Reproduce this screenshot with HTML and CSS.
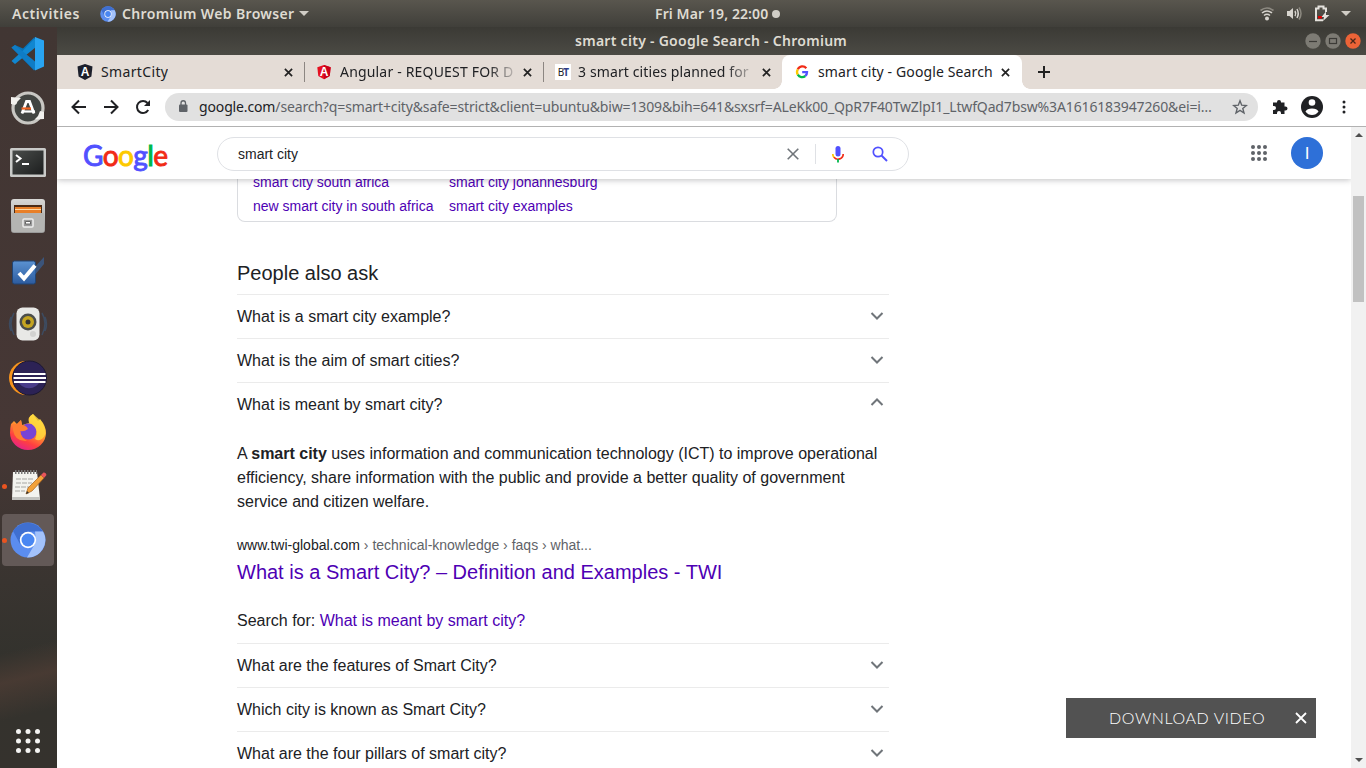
FILE: index.html
```html
<!DOCTYPE html>
<html lang="en">
<head>
<meta charset="utf-8">
<title>smart city - Google Search</title>
<link rel="stylesheet" href="styles.css">
</head>
<body>
<svg width="0" height="0" class="defs">
  <defs>
    <linearGradient id="ff" x1="0.8" y1="0" x2="0.3" y2="1"><stop offset="0" stop-color="#fff04a"/><stop offset=".45" stop-color="#ff9a2e"/><stop offset=".75" stop-color="#ff4040"/><stop offset="1" stop-color="#e4218c"/></linearGradient>
    <linearGradient id="steel" x1="0" y1="0" x2="0" y2="1"><stop offset="0" stop-color="#d8d8d6"/><stop offset="1" stop-color="#999"/></linearGradient>
    <linearGradient id="screen" x1="0" y1="0" x2="1" y2="1"><stop offset="0" stop-color="#4a4d4b"/><stop offset="1" stop-color="#1c1e1e"/></linearGradient>
    <linearGradient id="todo" x1="0" y1="0" x2="0" y2="1"><stop offset="0" stop-color="#5b92d2"/><stop offset="1" stop-color="#2c5b9e"/></linearGradient>
    <symbol id="chromium" viewBox="0 0 36 36">
      <circle cx="18" cy="18" r="17.500" fill="#5b8def"/>
      <path d="M3 9A17.500 17.500 0 0 1 33 9.500L18 9.500 10 22Z" fill="#3f6fd0"/>
      <path d="M33 9.500A17.500 17.500 0 0 1 17 35.500L26 20 25 9.500Z" fill="#a3c2fb"/>
      <circle cx="18" cy="18" r="8.200" fill="#fff"/><circle cx="18" cy="18" r="6.500" fill="#4a87f2"/>
    </symbol>
    <symbol id="down" viewBox="0 0 14 10"><path d="M1.500 1L7 6.500 12.500 1" fill="none" stroke="#70757a" stroke-width="2"/></symbol>
    <symbol id="x" viewBox="0 0 10 10"><path d="M1 1L9 9M9 1L1 9" stroke="currentColor" stroke-width="1.900"/></symbol>
  </defs>
</svg>
<header class="topbar">
  <span class="activities">Activities</span>
  <svg class="app-icon" width="16" height="16"><use href="#chromium"/></svg>
  <span class="app-name">Chromium Web Browser</span>
  <i class="caret"></i>
  <span class="clock">Fri Mar 19, 22:00</span><i class="clock-dot"></i>
  <div class="tray">
    <svg width="16" height="16" viewBox="0 0 16 16" fill="none" stroke="#d8d5cf" stroke-width="1.600"><path d="M1.500 4.500Q8 -.5 14.500 4.500" stroke="#8c8980"/><path d="M3 7Q8 3 13 7M5 9.500Q8 7 11 9.500"/><circle cx="8" cy="12.500" r="1.200" fill="#d8d5cf"/></svg>
    <svg width="17" height="16" viewBox="0 0 17 16" fill="none" stroke="#d8d5cf" stroke-width="1.500"><path d="M1 5H3.500L7 2V13L3.500 10H1Z" fill="#d8d5cf" stroke="none"/><path d="M9 5Q10.500 7.500 9 10M11 3Q13.500 7.500 11 12"/><path d="M13 1.500Q17 7.500 13 13.500" stroke="#8c8980"/></svg>
    <svg width="16" height="17" viewBox="0 0 16 17"><path d="M9 15.200H2V3.500H4.500V1.500H9.500V3.500H12V7" fill="none" stroke="#e4e1dc" stroke-width="2"/><path d="M4 11H8V13.500H4Z" fill="#d00"/><path d="M12 6.500L7.500 12H10L9 16 15.500 10H12Z" fill="#e4e1dc"/></svg>
    <i class="caret"></i>
  </div>
</header>
<div class="desktop">
  <nav class="launcher">
    <span class="item"><svg width="36" height="36" viewBox="0 0 36 36"><path d="M24.500 1L13 12.500 5 9 1.500 11.500 24 34.500V26L15.500 18.500 25 10Z" fill="#0873b8"/><path d="M1.500 25L5 28 26 11V1L13.500 14Z" fill="#1187d0"/><path d="M1.500 11.500L5 9 25 25.500V34.500Z" fill="#0f7cc5"/><path d="M25 1L34 4.500V30.500L25 34.500Z" fill="#29a4f1"/></svg></span>
    <span class="item"><svg width="36" height="36" viewBox="0 0 36 36"><circle cx="18" cy="18" r="15" fill="#424542" stroke="#c8c7c3" stroke-width="3.200"/><path d="M1 7L11 8 7.500 11.500Q7 14 5 15L1 14ZM34 29L24.500 29.500 28 26 30 21 34 22Z" fill="#f2f1ee"/><path d="M12 23.500L16.500 11.500H19.500L24 23.500" fill="none" stroke="#fff" stroke-width="2.800"/><path d="M13 21.500H25" stroke="#fff" stroke-width="2.200"/><path d="M11.500 18.500H21" stroke="#f26422" stroke-width="2.200"/></svg></span>
    <span class="item"><svg width="38" height="32" viewBox="0 0 38 32"><rect x="1" y="2" width="36" height="29" rx="1.500" fill="#c9cac8"/><rect x="3.500" y="4.500" width="31" height="24" fill="url(#screen)"/><path d="M7 9L11.500 12.500 7 16" fill="none" stroke="#fff" stroke-width="2"/><path d="M13 18H20" stroke="#fff" stroke-width="2"/></svg></span>
    <span class="item"><svg width="36" height="36" viewBox="0 0 36 36"><rect x="1" y="1" width="34" height="34" rx="3" fill="url(#steel)"/><rect x="4" y="7" width="28" height="8" fill="#4b2b16"/><path d="M5 9H31V15H5Z" fill="#e87f28"/><path d="M5 11.500H31" stroke="#ffd9a5"/><rect x="2" y="15" width="32" height="19" rx="1" fill="#b4b4b2"/><rect x="13" y="21" width="10" height="8" rx="1" fill="#999" stroke="#eee" stroke-width="1.500"/><path d="M15.500 23.500H20.500V26H15.500Z" fill="#fff" stroke="#666"/></svg></span>
    <span class="item"><svg width="36" height="36" viewBox="0 0 36 36"><rect x="2.500" y="9" width="23" height="23" rx="2" fill="url(#todo)" stroke="#204474"/><path d="M22 18L34 5V12L24 24Z" fill="#356db5" opacity=".55"/><path d="M9 21L14 26.500 25 13.500" fill="none" stroke="#fff" stroke-width="4"/></svg></span>
    <span class="item"><svg width="40" height="38" viewBox="0 0 40 38"><path d="M6 8Q0 18 6 30M3 12Q0 19 3 26M34 8Q40 18 34 30M37 12Q40 19 37 26" fill="none" stroke="#3d4b60" stroke-width="1.500"/><rect x="8.500" y="2.500" width="23" height="33" rx="6" fill="#e8e8e6"/><circle cx="20" cy="17" r="8.500" fill="#4c4e4b"/><circle cx="20" cy="17" r="6" fill="#c5a521"/><circle cx="20" cy="17" r="2.500" fill="#333"/><circle cx="25" cy="29" r="3" fill="#d2d2d0"/></svg></span>
    <span class="item"><svg width="40" height="38" viewBox="0 0 40 38"><circle cx="18" cy="19" r="17" fill="#f7941e"/><circle cx="21.500" cy="19" r="17" fill="#2c2255" stroke="#1b1733"/><path d="M10 22A12 12 0 0 0 32 22Z" fill="#4a3c8a"/><path d="M6 15H37.500M5.500 19H38M6 23H37.500" stroke="#fff" stroke-width="2"/></svg></span>
    <span class="item"><svg width="38" height="38" viewBox="0 0 38 38"><path d="M2 11L5 8 8 11 12 7 13 12 20 10Q18 4 24 1L29 8 31 6Q37 13 37 20A18 17 0 0 1 1 20Q1 15 2 11Z" fill="url(#ff)"/><circle cx="19.500" cy="18.500" r="8" fill="#7744d5"/><path d="M4 11L8 11 12 7 13 12Q17 12 19 16 15 19 11 18 12 25 18 28 6 29 4 17Z" fill="#ff7e32"/><path d="M24 1Q37 11 36.500 21 32 30 26 26 31 16 21 10Q18 5 24 1Z" fill="#ffda3e" opacity=".8"/></svg></span>
    <span class="item running"><svg width="40" height="38" viewBox="0 0 40 38"><path d="M5 5H29L32 32H4Z" fill="#f3f3ef"/><path d="M4 30H32V33H4Z" fill="#c2c2be"/><path d="M7 5H29" stroke="#777" stroke-width="4" stroke-dasharray="1.500 1.500"/><path d="M8 12H26M8 16H24M7 20H21M7 24H17" stroke="#a7a7a3" stroke-dasharray="5 1"/><path d="M18 27L20 21 33 8 36 11 24 24Z" fill="#f2a13a" stroke="#a6601a" stroke-width=".7"/><path d="M33 8L35.500 5.500Q38 5 38.500 8L36 11Z" fill="#e8555a"/><path d="M18 27L19 24 21 26Z" fill="#333"/></svg></span>
    <span class="item running active"><svg width="36" height="36"><use href="#chromium"/></svg></span>
    <span class="item apps"><svg width="26" height="26" viewBox="0 0 26 26" fill="#f4f4f2"><circle cx="3.500" cy="3.500" r="2.500"/><circle cx="13" cy="3.500" r="2.500"/><circle cx="22.500" cy="3.500" r="2.500"/><circle cx="3.500" cy="13" r="2.500"/><circle cx="13" cy="13" r="2.500"/><circle cx="22.500" cy="13" r="2.500"/><circle cx="3.500" cy="22.500" r="2.500"/><circle cx="13" cy="22.500" r="2.500"/><circle cx="22.500" cy="22.500" r="2.500"/></svg></span>
  </nav>
  <section class="window">
    <div class="titlebar">
      <span class="window-title">smart city - Google Search - Chromium</span>
      <div class="controls">
        <svg width="16" height="16" viewBox="0 0 16 16"><circle cx="8" cy="8" r="7.700" fill="#7d7b74"/><path d="M4 8.500H12" stroke="#3c3b37" stroke-width="1.200"/></svg>
        <svg width="16" height="16" viewBox="0 0 16 16"><circle cx="8" cy="8" r="7.700" fill="#7d7b74"/><rect x="4.500" y="5.500" width="7" height="5" fill="none" stroke="#3c3b37" stroke-width="1.200"/></svg>
        <svg width="16" height="16" viewBox="0 0 16 16"><circle cx="8" cy="8" r="7.700" fill="#ec6337"/><path d="M5.500 5.500L10.500 10.500M10.500 5.500L5.500 10.500" stroke="#4a2618" stroke-width="1.300"/></svg>
      </div>
    </div>
    <div class="tabs">
      <div class="tab first"><svg class="fav" width="16" height="16" viewBox="0 0 16 16"><path d="M8 0L15.500 2.600 14.400 12.400 8 16 1.600 12.400.5 2.600Z" fill="#1c1f2b"/><text x="8" y="12" text-anchor="middle" class="fav-a">A</text></svg><span class="label l1">SmartCity</span><svg class="close" width="9" height="9"><use href="#x"/></svg></div>
      <div class="tab second"><svg class="fav" width="16" height="16" viewBox="0 0 16 16"><path d="M8 1L14.700 3.300 13.700 12 8 15.200 2.300 12 1.300 3.300Z" fill="#e5101f"/><path d="M8 1L14.700 3.300 13.700 12 8 15.200Z" fill="#c9001c"/><text x="8" y="11.800" text-anchor="middle" class="fav-a">A</text></svg><span class="label fade l2">Angular - REQUEST FOR D</span><svg class="close" width="9" height="9"><use href="#x"/></svg></div>
      <div class="tab third"><span class="fav bt">B<b>T</b></span><span class="label fade l3">3 smart cities planned for</span><svg class="close" width="9" height="9"><use href="#x"/></svg></div>
      <div class="tab current"><svg class="fav" width="16" height="16" viewBox="0 0 16 16" fill="none" stroke-width="2.300"><path d="M12.300 4.300A5 5 0 0 0 3.800 5.400" stroke="#f12b16"/><path d="M3.800 5.400A5 5 0 0 0 3.800 10.700" stroke="#fdc900"/><path d="M3.800 10.700A5 5 0 0 0 11.300 12" stroke="#00b84c"/><path d="M11.300 12A5 5 0 0 0 13 8.200H8.200" stroke="#5151ff"/></svg><span class="label l4">smart city - Google Search</span><svg class="close" width="9" height="9"><use href="#x"/></svg></div>
      <svg class="plus" width="12" height="12" viewBox="0 0 12 12"><path d="M6 0V12M0 6H12" stroke="#222" stroke-width="2"/></svg>
    </div>
    <div class="toolbar">
      <svg width="16" height="16" viewBox="0 0 16 16" fill="none" stroke="#202124" stroke-width="2"><path d="M15 8H2M8 1.500L1.500 8 8 14.500"/></svg>
      <svg width="16" height="16" viewBox="0 0 16 16" fill="none" stroke="#202124" stroke-width="2"><path d="M1 8H14M8 1.500L14.500 8 8 14.500"/></svg>
      <svg width="16" height="16" viewBox="0 0 16 16"><path d="M13.200 11A6 6 0 1 1 12.500 4" fill="none" stroke="#202124" stroke-width="2"/><path d="M15 1V7H9Z" fill="#202124"/></svg>
      <div class="omnibox">
        <svg width="10" height="13" viewBox="0 0 10 13"><rect x="1" y="4.500" width="8.500" height="7.500" rx="1" fill="#5f6368"/><path d="M3 5V3A2.200 2.200 0 0 1 7.500 3V5" fill="none" stroke="#5f6368" stroke-width="1.300"/></svg>
        <span class="url"><b>google.com</b>/search?q=smart+city&amp;safe=strict&amp;client=ubuntu&amp;biw=1309&amp;bih=641&amp;sxsrf=ALeKk00_QpR7F40TwZlpI1_LtwfQad7bsw%3A1616183947260&amp;ei=i…</span>
        <svg class="star" width="16" height="16" viewBox="0 0 16 16"><path d="M8 1.800L9.700 6.200 14.300 6.500 10.800 9.400 12 14 8 11.400 4 14 5.200 9.400 1.700 6.500 6.300 6.200Z" fill="none" stroke="#5f6368" stroke-width="1.400"/></svg>
      </div>
      <svg class="puzzle" width="16" height="16" viewBox="0 0 16 16"><path d="M1 3.500H5V3A2 2 0 0 1 9 3V3.500H12.500V7.500H13.500A2 2 0 0 1 13.500 11.500H12.500V15H9V14A2 2 0 0 0 5 14V15H1V11H2A2 2 0 0 0 2 7H1Z" fill="#202124"/></svg>
      <svg class="person" width="22" height="22" viewBox="0 0 22 22"><circle cx="11" cy="11" r="11" fill="#202124"/><circle cx="11" cy="6.500" r="3.300" fill="#fff"/><path d="M4.500 15.500Q6 12.500 11 12.500T17.500 15.500Q15 19 11 19T4.500 15.500Z" fill="#fff"/></svg>
      <svg class="kebab" width="4" height="14" viewBox="0 0 4 14" fill="#202124"><circle cx="2" cy="2" r="1.500"/><circle cx="2" cy="7" r="1.500"/><circle cx="2" cy="12" r="1.500"/></svg>
    </div>
    <div class="viewport">
      <div class="page">
        <div class="search-header">
          <div class="logo" aria-label="Google"><span class="blue">G</span><span class="red">o</span><span class="yellow">o</span><span class="blue">g</span><span class="green">l</span><span class="red">e</span></div>
          <div class="searchbox">
            <span class="query">smart city</span>
            <svg width="12" height="12" viewBox="0 0 12 12"><path d="M.7.7L11.300 11.300M11.300.7L.7 11.300" stroke="#70757a" stroke-width="1.600"/></svg>
            <i class="divider"></i>
            <svg width="14" height="18" viewBox="0 0 14 18"><rect x="4.500" y="1" width="5" height="10.500" rx="2.500" fill="#5151ff"/><path d="M1.800 9A5.300 5.300 0 0 0 3 12.500" fill="none" stroke="#fdc900" stroke-width="1.700"/><path d="M3 12.300A5.200 5.200 0 0 0 12.200 9" fill="none" stroke="#f12b16" stroke-width="1.700"/><path d="M7 14V17.500" stroke="#00b84c" stroke-width="1.800"/></svg>
            <svg class="glass" width="16" height="16" viewBox="0 0 16 16"><circle cx="6" cy="6" r="4.700" fill="none" stroke="#5151ff" stroke-width="1.700"/><path d="M9.500 9.500L15 15" stroke="#5151ff" stroke-width="1.900"/></svg>
          </div>
          <svg class="grid" width="16" height="16" viewBox="0 0 16 16" fill="#5f6368"><circle cx="2" cy="2" r="2"/><circle cx="8" cy="2" r="2"/><circle cx="14" cy="2" r="2"/><circle cx="2" cy="8" r="2"/><circle cx="8" cy="8" r="2"/><circle cx="14" cy="8" r="2"/><circle cx="2" cy="14" r="2"/><circle cx="8" cy="14" r="2"/><circle cx="14" cy="14" r="2"/></svg>
          <span class="avatar">I</span>
        </div>
        <main class="results">
          <div class="related"><a>smart city south africa</a><a>smart city johannesburg</a><a>new smart city in south africa</a><a>smart city examples</a></div>
          <h2>People also ask</h2>
          <div class="question">What is a smart city example?<svg width="14" height="10"><use href="#down"/></svg></div>
          <div class="question">What is the aim of smart cities?<svg width="14" height="10"><use href="#down"/></svg></div>
          <div class="question open">What is meant by smart city?<svg width="14" height="10"><use href="#down"/></svg></div>
          <div class="answer">
            <p>A <b>smart city</b> uses information and communication technology (ICT) to improve operational<br>efficiency, share information with the public and provide a better quality of government<br>service and citizen welfare.</p>
            <div class="cite">www.twi-global.com<span> › technical-knowledge › faqs › what...</span></div>
            <a class="source">What is a Smart City? – Definition and Examples - TWI</a>
            <div class="search-for">Search for: <a>What is meant by smart city?</a></div>
          </div>
          <div class="question">What are the features of Smart City?<svg width="14" height="10"><use href="#down"/></svg></div>
          <div class="question">Which city is known as Smart City?<svg width="14" height="10"><use href="#down"/></svg></div>
          <div class="question">What are the four pillars of smart city?<svg width="14" height="10"><use href="#down"/></svg></div>
        </main>
        <div class="download"><span>DOWNLOAD VIDEO</span><svg width="12" height="12" viewBox="0 0 12 12"><path d="M1 1L11 11M11 1L1 11" stroke="#fff" stroke-width="1.800"/></svg></div>
      </div>
      <div class="scrollbar"><i class="up"></i><i class="thumb"></i><i class="dn"></i></div>
    </div>
  </section>
</div>
</body>
</html>
```
FILE: styles.css
```css
* { box-sizing: border-box; }
body { margin: 0; width: 1366px; height: 768px; overflow: hidden; display: flex; flex-direction: column; font-family: "Liberation Sans", Arial, sans-serif; color: #202124; background: #fff; }
svg { display: block; flex: none; }
.defs { position: absolute; }
a { color: #4e00b4; }

.topbar { height: 27px; flex: none; display: flex; align-items: center; padding-left: 12px; background: linear-gradient(#59564e, #403f3a); color: #dfdbd2; font: 600 14px/27px "Noto Sans", sans-serif; white-space: nowrap; }
.activities { width: 88px; letter-spacing: .55px; }
.app-name { margin-left: 6px; width: 173px; letter-spacing: .35px; }
.caret { border: 5px solid transparent; border-top-color: #d0cdc6; border-bottom: 0; margin-left: 4px; }
.clock { margin-left: 346px; width: 114px; letter-spacing: .1px; }
.clock-dot { width: 8px; height: 8px; border-radius: 50%; background: #d0cdc6; margin-left: 3px; }
.tray { margin-left: auto; padding-right: 15px; display: flex; align-items: center; gap: 11px; }
.tray .caret { margin-left: 0; }

.desktop { flex: 1; min-height: 0; display: flex; }
.launcher { width: 57px; display: flex; flex-direction: column; background: linear-gradient(166deg, transparent 83%, rgba(92,66,56,.5) 87%, transparent 92%), linear-gradient(#413633 0, #463735 55%, #393430 75%, #33322d 85%, #35322d); }
.item { width: 56px; height: 54px; flex: none; display: flex; align-items: center; justify-content: center; position: relative; }
.item.active { width: 52px; height: 52px; margin: 1px 2px; border-radius: 4px; background: #635957; }
.item.running::before { content: ""; position: absolute; left: 2px; width: 5px; height: 5px; border-radius: 50%; background: #e95420; }
.item.active::before { left: 0; }
.apps { margin-top: auto; }

.window { flex: 1; min-width: 0; display: flex; flex-direction: column; }
.titlebar { height: 28px; flex: none; display: flex; align-items: center; background: linear-gradient(#3b3a35, #4b4a44); color: #dfdbd2; font: 600 14px/28px "Noto Sans", sans-serif; }
.window-title { margin-left: 518px; white-space: nowrap; letter-spacing: .28px; }
.controls { margin-left: auto; display: flex; gap: 4px; padding-right: 5px; }
.tabs { height: 34px; flex: none; display: flex; align-items: center; background: #e4dcd6; font: 14px/34px "Noto Sans", sans-serif; }
.tab { height: 34px; display: flex; align-items: center; position: relative; }
.label { margin-left: 8px; white-space: nowrap; overflow: hidden; }
.close { margin-left: auto; color: #222; }
.first { width: 248px; padding: 0 12px 0 20px; }
.second { width: 239px; padding: 0 12px 0 11px; }
.third { width: 238px; padding: 0 11px; }
.first::after, .second::after { content: ""; position: absolute; right: 0; top: 7px; width: 1px; height: 20px; background: #8c8682; }
.l1 { letter-spacing: .35px; }
.l2, .l3 { width: 177px; }
.l2 { letter-spacing: .18px; }
.l3 { letter-spacing: .12px; margin-left: 7px; }
.l4 { width: 179px; letter-spacing: .12px; }
.fade { -webkit-mask-image: linear-gradient(90deg, #000 148px, transparent 180px); mask-image: linear-gradient(90deg, #000 148px, transparent 180px); }
.fav { flex: none; }
.fav-a { font: bold 12px "Liberation Sans", Arial, sans-serif; fill: #fff; }
.bt { width: 16px; height: 16px; background: #fff; font: 10px/16px "Noto Sans", sans-serif; letter-spacing: -.8px; text-align: center; }
.bt b { color: #303d88; }
.current { width: 240px; padding: 0 12px; background: #fff; border-radius: 8px 8px 0 0; }
.current::before, .current::after { content: ""; position: absolute; bottom: 0; width: 8px; height: 8px; }
.current::before { left: -8px; background: radial-gradient(circle at 0 0, transparent 7.500px, #fff 8px); }
.current::after { right: -8px; background: radial-gradient(circle at 100% 0, transparent 7.500px, #fff 8px); }
.plus { margin-left: 16px; }
.toolbar { height: 38px; flex: none; border-bottom: 1px solid #b2b2b2; background: #fff; display: flex; align-items: center; gap: 16px; padding: 0 0 2px 14px; }
.omnibox { width: 1093px; height: 28px; margin-left: -2px; border-radius: 14px; background: #e1e1e1; display: flex; align-items: center; padding: 0 10px 0 13px; }
.url { flex: 1; margin-left: 11px; font: 14px/28px "Noto Sans", sans-serif; letter-spacing: -.14px; white-space: nowrap; color: #5f6368; }
.url b { font-weight: 400; color: #202124; }
.puzzle { margin-left: -2px; }
.person { margin-left: -3px; }
.kebab { margin-left: 3px; }

.viewport { flex: 1; min-height: 0; display: flex; }
.page { flex: 1; min-width: 0; display: flex; flex-direction: column; position: relative; overflow: hidden; }
.search-header { height: 52px; flex: none; display: flex; align-items: center; position: relative; z-index: 1; padding-left: 26px; background: #fff; box-shadow: 0 1px 6px rgba(32,33,36,.28); }
.logo { width: 134px; font: 28px/36px Lato, sans-serif; -webkit-text-stroke: .9px; letter-spacing: -.6px; padding-top: 3px; }
.blue { color: #5151ff; } .red { color: #f12b16; } .yellow { color: #fdc900; } .green { color: #00b84c; }
.searchbox { width: 692px; height: 34px; margin-top: 1px; border: 1px solid #dfe1e5; border-radius: 17px; display: flex; align-items: center; padding: 0 20px; font-size: 14px; }
.query { flex: 1; }
.divider { width: 1px; height: 20px; margin: 0 15px 0 16px; background: #dfe1e5; }
.glass { margin-left: 27px; }
.grid { margin-left: auto; }
.avatar { width: 32px; height: 32px; margin: 0 28px 0 24px; border-radius: 50%; background: #2e70d8; color: #fff; font-size: 17px; line-height: 34px; text-align: center; }
.results { flex: 1; min-height: 0; overflow: hidden; padding-left: 180px; }
.related { width: 600px; margin-top: -11px; height: 54px; padding: 2px 15px 0; border: 1px solid #dadce0; border-top: 0; border-radius: 0 0 8px 8px; display: grid; grid-template-columns: 196px 1fr; grid-auto-rows: 24px; font-size: 14px; line-height: 24px; }
h2 { margin: 38px 0 0; height: 34px; font-size: 20px; line-height: 26px; font-weight: 400; }
.question { width: 652px; height: 44px; border-top: 1px solid #ebebeb; display: flex; align-items: center; justify-content: space-between; padding-right: 5px; font-size: 16px; }
.open svg { transform: rotate(180deg); margin-top: -8px; }
.answer { width: 660px; height: 217px; padding-top: 16px; white-space: nowrap; }
.answer p { margin: 0; font-size: 16px; line-height: 24px; }
.cite { margin-top: 21px; font-size: 14px; line-height: 20px; }
.cite span { color: #5f6368; }
.source { display: block; margin-top: 4px; font-size: 20px; line-height: 26px; }
.search-for { margin-top: 26px; font-size: 16px; line-height: 20px; }
.download { position: absolute; right: 35px; bottom: 30px; width: 250px; height: 40px; padding: 0 9px 0 43px; display: flex; align-items: center; justify-content: space-between; background: #525252; color: #fff; font: 300 16px/40px Lato, sans-serif; letter-spacing: .6px; }
.scrollbar { width: 15px; display: flex; flex-direction: column; align-items: center; background: #f1f1f1; }
.up { border: 4px solid transparent; border-bottom-color: #505050; border-top: 0; margin-top: 6px; }
.thumb { width: 11px; height: 106px; margin-top: 59px; background: #c1c1c1; }
.dn { border: 4px solid transparent; border-top-color: #505050; border-bottom: 0; margin: auto 0 6px; }
```
